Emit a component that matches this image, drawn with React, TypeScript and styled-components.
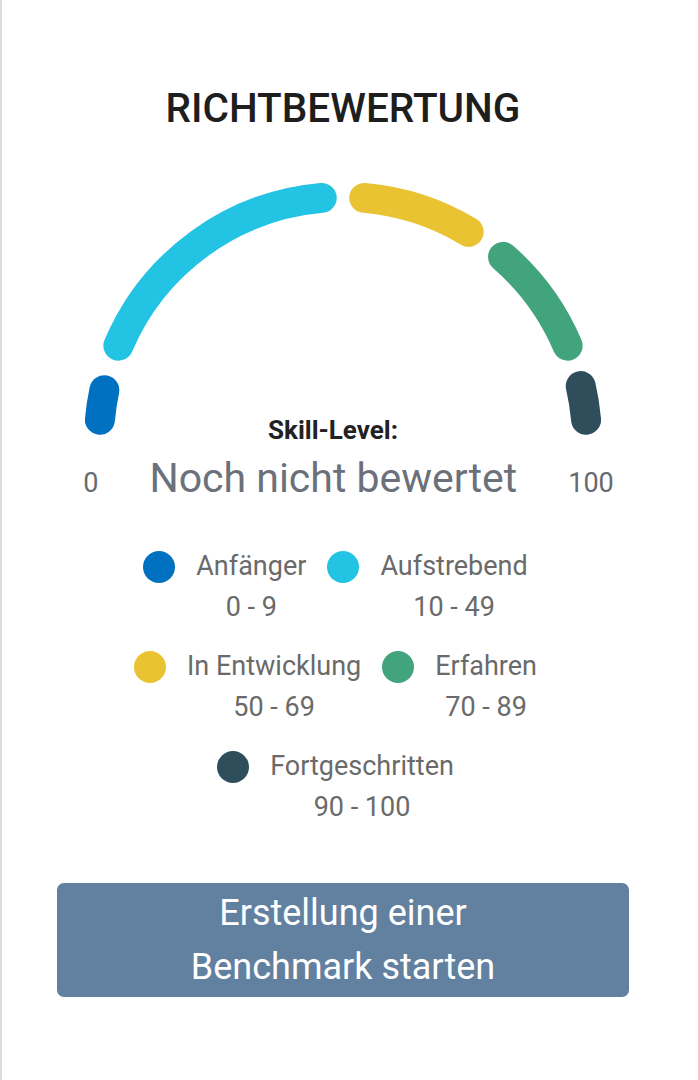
import React from "react";
import styled, { createGlobalStyle } from "styled-components";

const GlobalStyle = createGlobalStyle`
  html, body {
    margin: 0;
    padding: 0;
    background: #ffffff;
    font-family: Roboto, "Noto Sans", "Liberation Sans", sans-serif;
  }
`;

interface ISegment {
    from: number;
    to: number;
    color: string;
}

interface ILevel {
    label: string;
    range: string;
    color: string;
}

const segments: ISegment[] = [
    {from: 0, to: 17, color: "#0070c0"},
    {from: 18, to: 90, color: "#23c3e4"},
    {from: 90, to: 126, color: "#e9c331"},
    {from: 126, to: 162, color: "#41a47d"},
    {from: 162, to: 180, color: "#2f4e5b"},
];

const levelRows: ILevel[][] = [
    [
        {label: "Anfänger", range: "0 - 9", color: "#0070c0"},
        {label: "Aufstrebend", range: "10 - 49", color: "#23c3e4"},
    ],
    [
        {label: "In Entwicklung", range: "50 - 69", color: "#e9c331"},
        {label: "Erfahren", range: "70 - 89", color: "#41a47d"},
    ],
    [
        {label: "Fortgeschritten", range: "90 - 100", color: "#2f4e5b"},
    ],
];

const Card = styled.div`
  width: 684px;
  min-height: 1080px;
  border-left: 2px solid #dcdcdc;
  display: flex;
  flex-direction: column;
  align-items: center;
  box-sizing: border-box;
  padding-top: 86px;
`;

const Title = styled.h2`
  margin: 0 0 20px;
  font-size: 40.5px;
  line-height: 44px;
  font-weight: 500;
  color: #1e1e1e;
`;

const GaugeWrap = styled.div`
  position: relative;
  width: 686px;
  height: 357px;
`;

const Readout = styled.div`
  position: absolute;
  left: 0;
  right: 0;
  bottom: 0;
  display: flex;
  flex-direction: column;
  align-items: center;
`;

const SkillLabel = styled.div`
  font-size: 26px;
  line-height: 28px;
  font-weight: 700;
  color: #222222;
  margin: 0 20px 10px 0;
`;

const ValueRow = styled.div`
  display: flex;
  align-items: baseline;
  gap: 51px;
  padding-left: 11px;
`;

const Bound = styled.span`
  font-size: 27px;
  line-height: 48px;
  color: #666a70;
`;

const Value = styled.span`
  font-size: 41px;
  line-height: 48px;
  color: #6b717b;
`;

const Legend = styled.div`
  margin-top: 39px;
  display: flex;
  flex-direction: column;
  gap: 18px;
`;

const LegendRow = styled.div`
  display: flex;
  justify-content: center;
`;

const LegendItem = styled.div`
  display: flex;
  align-items: flex-start;
  gap: 21px;
  margin: 0 18px 0 3px;
`;

const Dot = styled.span<{ $color: string }>`
  width: 32px;
  height: 32px;
  border-radius: 50%;
  margin-top: 5px;
  background: ${(p) => p.$color};
  flex-shrink: 0;
`;

const LegendText = styled.div`
  display: flex;
  flex-direction: column;
  align-items: center;
  font-size: 27px;
  line-height: 41px;
  color: #6a6a6a;
`;

const ActionButton = styled.button`
  margin-top: 55px;
  width: 572px;
  padding: 3px 0;
  border: none;
  border-radius: 7px;
  background: #62809f;
  color: #ffffff;
  font-family: inherit;
  font-size: 36px;
  line-height: 54px;
  text-align: center;
  cursor: pointer;
`;

const CX = 343;
const CY = 291;
const R = 244;
const INSET = 5;

function point(deg: number) {
    const rad = (deg * Math.PI) / 180;
    return `${(CX - R * Math.cos(rad)).toFixed(2)} ${(CY - R * Math.sin(rad)).toFixed(2)}`;
}

function Gauge() {
    return (
        <svg width="686" height="357" viewBox="0 0 686 357">
            {segments.map((s) => (
                <path
                    key={s.from}
                    d={`M ${point(s.from + INSET)} A ${R} ${R} 0 0 1 ${point(s.to - INSET)}`}
                    fill="none"
                    stroke={s.color}
                    strokeWidth={30}
                    strokeLinecap="round"
                />
            ))}
        </svg>
    );
}

export default function App() {
    return (
        <>
            <GlobalStyle/>
            <Card>
                <Title>RICHTBEWERTUNG</Title>
                <GaugeWrap>
                    <Gauge/>
                    <Readout>
                        <SkillLabel>Skill-Level:</SkillLabel>
                        <ValueRow>
                            <Bound>0</Bound>
                            <Value>Noch nicht bewertet</Value>
                            <Bound>100</Bound>
                        </ValueRow>
                    </Readout>
                </GaugeWrap>
                <Legend>
                    {levelRows.map((row, i) => (
                        <LegendRow key={i}>
                            {row.map((level) => (
                                <LegendItem key={level.label}>
                                    <Dot $color={level.color}/>
                                    <LegendText>
                                        <span>{level.label}</span>
                                        <span>{level.range}</span>
                                    </LegendText>
                                </LegendItem>
                            ))}
                        </LegendRow>
                    ))}
                </Legend>
                <ActionButton>
                    Erstellung einer
                    <br/>
                    Benchmark starten
                </ActionButton>
            </Card>
        </>
    );
}
